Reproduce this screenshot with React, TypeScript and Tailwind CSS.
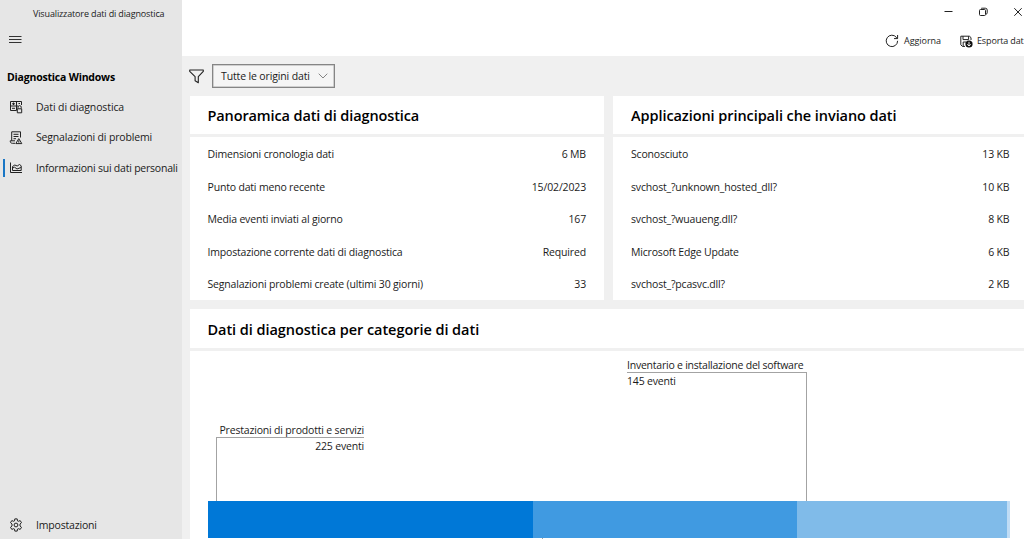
import type { ReactNode } from "react";

type Row = {
  label: string;
  value: string;
}

const overview: Row[] = [
  { label: "Dimensioni cronologia dati", value: "6 MB" },
  { label: "Punto dati meno recente", value: "15/02/2023" },
  { label: "Media eventi inviati al giorno", value: "167" },
  { label: "Impostazione corrente dati di diagnostica", value: "Required" },
  { label: "Segnalazioni problemi create (ultimi 30 giorni)", value: "33" },
];

const apps: Row[] = [
  { label: "Sconosciuto", value: "13 KB" },
  { label: "svchost_?unknown_hosted_dll?", value: "10 KB" },
  { label: "svchost_?wuaueng.dll?", value: "8 KB" },
  { label: "Microsoft Edge Update", value: "6 KB" },
  { label: "svchost_?pcasvc.dll?", value: "2 KB" },
];

function DataIcon() {
  return (
    <svg width="14" height="14" viewBox="0 0 14 14" fill="none" stroke="#222" strokeWidth="1">
      <path d="M7.5 10.5H1.5V1.5H12.5V5M7.5 1.5V10.5M1.5 6H9" />
      <path d="M3 3.8H6M4.5 2.5V5M3 8.3H6M9.5 3.5H11" />
      <path d="M9 8.5V7.2A1.6 1.6 0 0 1 12.2 7.2V8.5M8.3 8.8H12.7V12.8H8.3Z" />
    </svg>
  )
}

function ReportIcon() {
  return (
    <svg width="14" height="14" viewBox="0 0 14 14" fill="none" stroke="#222" strokeWidth="1">
      <path d="M11.5 6.5V0.8H2.7V9.8M4.5 3.3H9.5M4.5 5.5H9.5M4.5 7.7H7M1.2 9.8H6M1.2 9.8C1.2 11.5 2 12.3 3.4 12.3H6" />
      <path d="M9.8 7.6L12.8 12.6H6.8ZM9.8 9.3V11M9.8 11.4V12.2" />
    </svg>
  )
}

function ChartIcon() {
  return (
    <svg width="14" height="14" viewBox="0 0 14 14" fill="none" stroke="#222" strokeWidth="1">
      <path d="M1.5 1.5V11.5H13" />
      <path d="M3.5 9.5V5.5L5.8 4L8.2 5L10.5 3.5L12.2 4.8V9.5ZM3.5 7L5.6 6.2L8 8L12.2 6.4" />
    </svg>
  )
}

function GearIcon() {
  return (
    <svg width="14" height="14" viewBox="0 0 14 14" fill="none" stroke="#222" strokeWidth="1" strokeLinejoin="round">
      <path d="M5.5 2.9L5.8 0.9H8.2L8.5 2.9L9.3 3.3L11.2 2.6L12.5 4.7L11 6V8L12.5 9.3L11.2 11.4L9.3 10.7L8.5 11.1L8.2 13.1H5.8L5.5 11.1L4.7 10.7L2.8 11.4L1.5 9.3L3 8V6L1.5 4.7L2.8 2.6L4.7 3.3Z" />
      <circle cx="7" cy="7" r="1.9" />
    </svg>
  )
}

type NavItemProps = {
  icon: ReactNode;
  label: string;
  tracking: string;
  active?: boolean;
}

function NavItem({ icon, label, tracking, active }: NavItemProps) {
  return (
    <a className="flex h-[30.4px] items-center whitespace-nowrap">
      <span className={`ml-[3px] h-[18px] w-[2px] ${active ? 'bg-[#1976c5]' : ''}`} />
      <span className="ml-1 w-[27px]">{icon}</span>
      <span className={tracking}>{label}</span>
    </a>
  )
}

type CardProps = {
  title: string;
  tracking: string;
  rows: Row[];
}

function Card({ title, tracking, rows }: CardProps) {
  return (
    <section className="flex w-[414.5px] shrink-0 flex-col gap-[3px]">
      <h2 className={`flex h-[38px] items-center bg-white px-[18px] pb-px pt-[2px] text-[14.5px] font-semibold text-black ${tracking}`}>{title}</h2>
      <div className="bg-white px-[18px]">
        {rows.map((row) => (
          <div key={row.label} className="flex h-[32.6px] items-center justify-between pt-[3px]">
            <span>{row.label}</span>
            <span className="tracking-[-0.15px]">{row.value}</span>
          </div>
        ))}
      </div>
    </section>
  )
}

export default function App() {
  return (
    <div className="flex h-[539px] w-[1024px] overflow-hidden bg-[#f0f0f0] font-['Open_Sans','Noto_Sans',sans-serif] text-[10.5px] tracking-[-0.18px] text-[#1b1b1b]">
      <aside className="flex w-[182px] shrink-0 flex-col bg-[#e6e6e6]">
        <div className="flex h-7 items-center pl-[33px] text-[9px] tracking-[-0.14px]">Visualizzatore dati di diagnostica</div>
        <svg className="ml-[9px] mt-1.5" width="13" height="12" viewBox="0 0 13 12" stroke="#333" strokeWidth="1">
          <path d="M0 2.5H12.5M0 5.5H12.5M0 8.5H12.5" />
        </svg>
        <h1 className="mt-[22px] flex h-[18px] items-center pl-[7px] pt-[2px] text-[10.5px] font-bold tracking-[-0.2px] text-black">Diagnostica Windows</h1>
        <nav className="mt-[6px]">
          <NavItem icon={<DataIcon />} label="Dati di diagnostica" tracking="pt-px tracking-[-0.1px]" />
          <NavItem icon={<ReportIcon />} label="Segnalazioni di problemi" tracking="pt-px tracking-[-0.17px]" />
          <NavItem icon={<ChartIcon />} label="Informazioni sui dati personali" tracking="pt-px tracking-[-0.22px]" active />
        </nav>
        <div className="mb-[-1px] mt-auto">
          <NavItem icon={<GearIcon />} label="Impostazioni" tracking="pt-[3px] tracking-[-0.18px]" />
        </div>
      </aside>

      <main className="flex min-w-0 flex-1 flex-col">
        <header className="flex h-14 shrink-0 flex-col bg-white">
          <div className="flex h-6 items-center pl-[762px]">
            <svg className="shrink-0" width="80" height="10" viewBox="0 0 80 10" fill="none" stroke="#222" strokeWidth="1">
              <path d="M0.5 4.5H8.5" />
              <path d="M35.5 3.5Q35.5 2.5 36.5 2.5H40.5Q41.5 2.5 41.5 3.5V7.5Q41.5 8.5 40.5 8.5H36.5Q35.5 8.5 35.5 7.5ZM37 1.6Q37.4 1.2 38.2 1.2H41.3Q43.2 1.2 43.2 3V5.8Q43.2 7 42 7.3" />
              <path d="M70.3 1.2L77.7 8.8M77.7 1.2L70.3 8.8" />
            </svg>
          </div>
          <div className="flex h-8 items-center whitespace-nowrap pl-[703px] pt-[2px] text-[9px] tracking-[-0.05px]">
            <svg className="shrink-0" width="14" height="14" viewBox="0 0 14 14" fill="none" stroke="#222" strokeWidth="1">
              <path d="M12.6 6.8A5.7 5.7 0 1 1 11.4 3.4L12.4 4.4M12.6 1V4.6H9" />
            </svg>
            <span className="ml-[5px] w-[56px] shrink-0">Aggiorna</span>
            <svg className="shrink-0" width="13" height="13" viewBox="0 0 13 13" fill="none" stroke="#222" strokeWidth="1">
              <path d="M5 11.4H2.4L0.8 9.8V1.2H9.4L11 2.6V5M3 1.2V4.6H8.6V1.2M3.2 11.4V7H6" />
              <circle cx="9" cy="9" r="3.6" fill="#111" stroke="none" />
              <path d="M9 6.8V11M7.2 9.3L9 11L10.8 9.3" stroke="#fff" strokeWidth="0.9" />
            </svg>
            <span className="ml-1 tracking-[-0.14px]">Esporta dat</span>
          </div>
        </header>

        <div className="flex h-10 shrink-0 items-center pl-[7px]">
          <svg width="15" height="15" viewBox="0 0 15 15" fill="none" stroke="#222" strokeWidth="1.1" strokeLinejoin="round">
            <path d="M0.7 1H14.3V2.4L9.3 7.6V13.8L6.1 11.8V7.6L0.7 2.4Z" />
          </svg>
          <button className="ml-2 flex h-6 w-[123px] items-center justify-between border border-[#858585] bg-[#f5f5f5] pl-2 pr-[6px] shadow-[inset_0_0_0_0.5px_#aaa]">
            <span className="pt-px tracking-[-0.14px]">Tutte le origini dati</span>
            <svg width="10" height="6" viewBox="0 0 10 6" fill="none" stroke="#777" strokeWidth="0.9">
              <path d="M0.7 0.7L5 5L9.3 0.7" />
            </svg>
          </button>
        </div>

        <div className="flex shrink-0 gap-[9px] pl-[7.5px]">
          <Card title="Panoramica dati di diagnostica" tracking="tracking-[-0.12px]" rows={overview} />
          <Card title="Applicazioni principali che inviano dati" tracking="tracking-[-0.07px]" rows={apps} />
        </div>

        <section className="ml-[7.5px] mt-[9px] flex flex-1 flex-col gap-[3px]">
          <h2 className="flex h-[39px] shrink-0 items-center bg-white px-[18px] pt-[3px] text-[14.5px] font-semibold tracking-[-0.05px] text-black">Dati di diagnostica per categorie di dati</h2>
          <div className="flex flex-1 flex-col bg-white pl-[18px]">
            <div className="flex h-[150px] whitespace-nowrap">
              <div className="ml-[8.5px] mt-[71px] w-[148px]">
                <div className="flex h-[15px] items-end justify-end leading-[13px]">Prestazioni di prodotti e servizi</div>
                <div className="h-[64px] border-l border-t border-[#a3a3a3] text-right leading-[16px]">225 eventi</div>
              </div>
              <div className="ml-[263px] mt-[7px] w-[180px]">
                <div className="h-[14px] leading-[15px] tracking-[-0.23px]">Inventario e installazione del software</div>
                <div className="h-[129px] border-r border-t border-[#a3a3a3] leading-[16px]">145 eventi</div>
              </div>
            </div>
            <div className="flex h-[37px]">
              <div className="w-[325px] bg-[#0078d7]" />
              <div className="w-[264px] bg-[#409ae1]" />
              <div className="w-[210px] bg-[#80bbe9]" />
              <div className="w-[3px] bg-[#bfdcf5]" />
            </div>
            <div className="ml-[334px] h-px w-px bg-[#a3a3a3]" />
          </div>
        </section>
      </main>
    </div>
  )
}
